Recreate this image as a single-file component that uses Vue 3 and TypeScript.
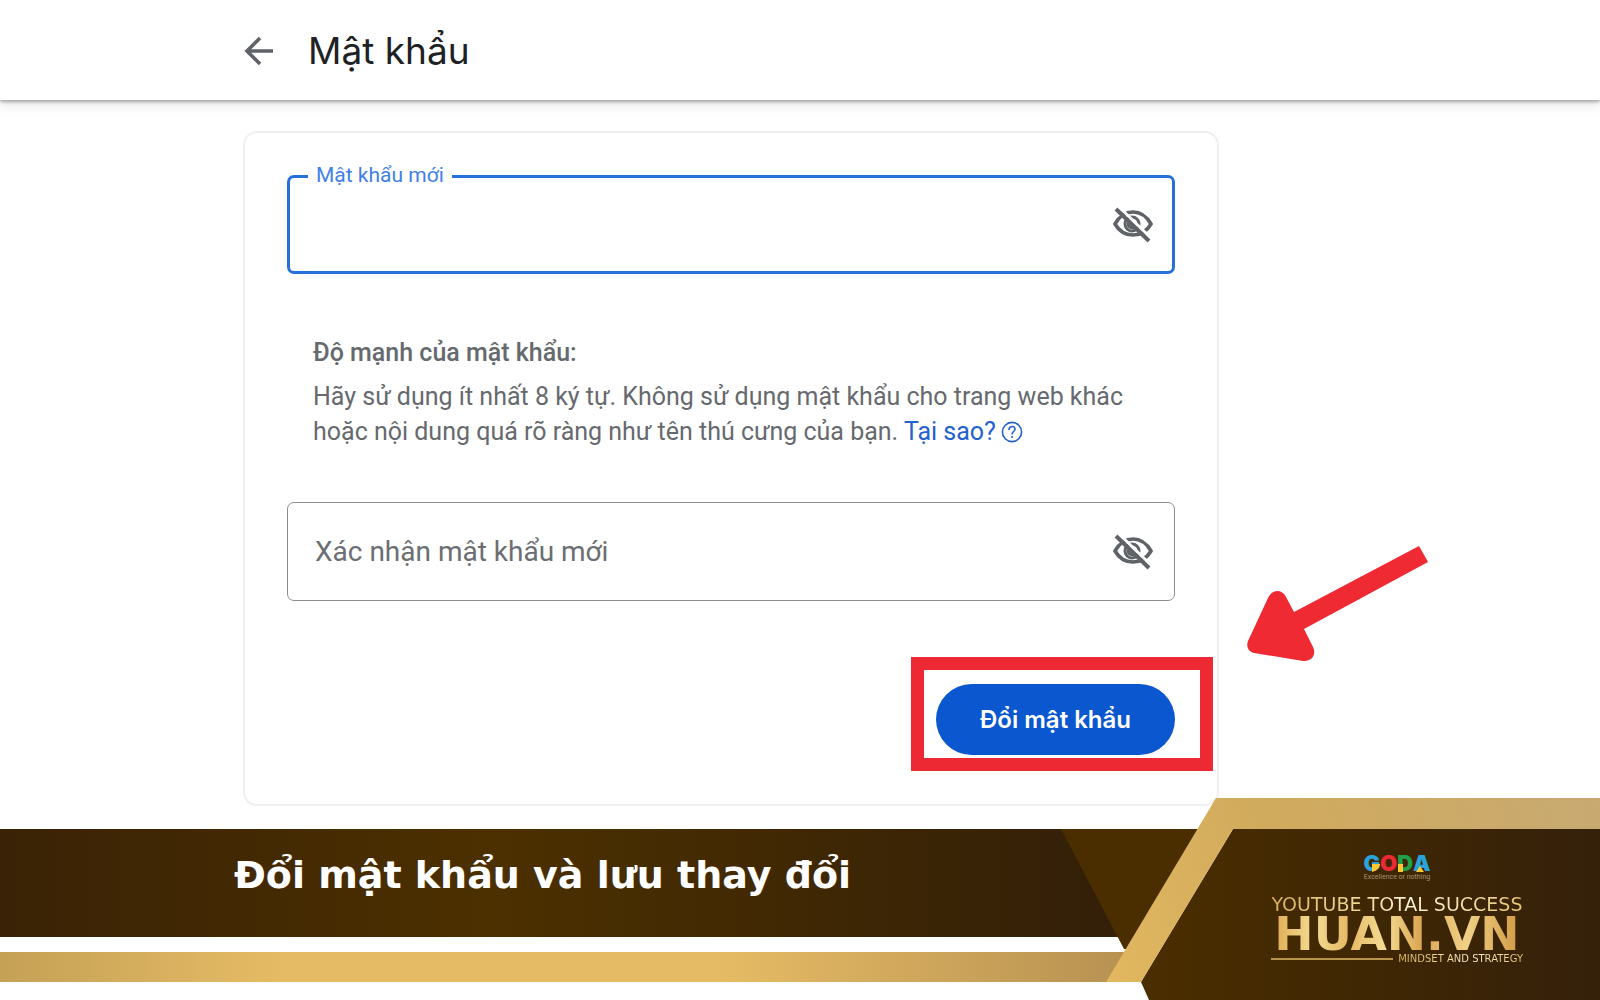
<script setup lang="ts">
import { ref } from 'vue'

const password = ref('')
const confirmation = ref('')
const showPassword = ref(false)
const showConfirmation = ref(false)
</script>

<template>
  <div class="page">
    <header class="topbar">
      <a class="back" href="#" aria-label="Quay lại">
        <svg width="30" height="30" viewBox="0 0 30 30" fill="none" stroke="#5f6368" stroke-width="3.6">
          <path d="M29 15H4M16 2 3 15l13 13" />
        </svg>
      </a>
      <h1>Mật khẩu</h1>
    </header>

    <main class="content">
      <form class="card" @submit.prevent>
        <div class="field focused">
          <label for="new-password">Mật khẩu mới</label>
          <input id="new-password" v-model="password" :type="showPassword ? 'text' : 'password'" />
          <button type="button" class="eye" aria-label="Hiện mật khẩu" @click="showPassword = !showPassword">
            <svg width="42" height="38" viewBox="0 0 42 38" fill="none">
              <path d="M3 18C7 11 13 6 21 6s14 5 18 12c-4 7-10 11-18 11S7 25 3 18Z" stroke="#5f6368" stroke-width="3.6" />
              <circle cx="20" cy="18" r="7" stroke="#5f6368" stroke-width="3" />
              <path d="M16 17c0 4 2 5 6 5" stroke="#5f6368" stroke-width="3" />
              <path d="M7 1l33 32" stroke="#fff" stroke-width="3" />
              <path d="M4 3l33 32" stroke="#5f6368" stroke-width="4" />
            </svg>
          </button>
        </div>

        <section class="hint">
          <h2>Độ mạnh của mật khẩu:</h2>
          <p>
            Hãy sử dụng ít nhất 8 ký tự. Không sử dụng mật khẩu cho trang web khác hoặc nội dung quá rõ ràng như tên thú cưng của bạn.
            <a href="#">Tại sao?<svg class="help" width="22" height="22" viewBox="0 0 22 22" fill="none" stroke="currentColor" stroke-width="1.6"><circle cx="11" cy="11" r="9.6" /><path d="M8 9c0-4.500 6-4.500 6-1 0 2.500-3 2.500-3 5.500M11 15v2" /></svg></a>
          </p>
        </section>

        <div class="field">
          <input
            v-model="confirmation"
            :type="showConfirmation ? 'text' : 'password'"
            placeholder="Xác nhận mật khẩu mới"
            aria-label="Xác nhận mật khẩu mới"
          />
          <button type="button" class="eye" aria-label="Hiện mật khẩu" @click="showConfirmation = !showConfirmation">
            <svg width="42" height="38" viewBox="0 0 42 38" fill="none">
              <path d="M3 18C7 11 13 6 21 6s14 5 18 12c-4 7-10 11-18 11S7 25 3 18Z" stroke="#5f6368" stroke-width="3.6" />
              <circle cx="20" cy="18" r="7" stroke="#5f6368" stroke-width="3" />
              <path d="M16 17c0 4 2 5 6 5" stroke="#5f6368" stroke-width="3" />
              <path d="M7 1l33 32" stroke="#fff" stroke-width="3" />
              <path d="M4 3l33 32" stroke="#5f6368" stroke-width="4" />
            </svg>
          </button>
        </div>

        <div class="actions">
          <div class="callout">
            <button type="submit" class="submit">Đổi mật khẩu</button>
            <span class="frame"></span>
            <svg class="arrow" width="182" height="117" viewBox="0 0 182 117" fill="#ef2a33">
              <path d="M172 1l9 16L57 84l9 18c4 8-2 15-10 14L7 108c-6-1-8-7-6-12l20-43c4-9 14-9 18-1l8 15Z" />
            </svg>
          </div>
        </div>
      </form>
    </main>

    <footer class="banner">
      <svg class="backdrop" viewBox="0 0 1600 202" preserveAspectRatio="none">
        <defs>
          <linearGradient id="dark-band">
            <stop offset="0" stop-color="#3a2206" />
            <stop offset="0.43" stop-color="#4c3000" />
            <stop offset="0.96" stop-color="#342008" />
          </linearGradient>
          <linearGradient id="gold-band">
            <stop offset="0" stop-color="#c5a156" />
            <stop offset="0.25" stop-color="#e6bb65" />
            <stop offset="0.63" stop-color="#e6bb65" />
            <stop offset="1" stop-color="#b69051" />
          </linearGradient>
          <linearGradient id="gold-edge" gradientUnits="userSpaceOnUse" x1="1106" y1="184" x2="1600" y2="0">
            <stop offset="0" stop-color="#e2b75f" />
            <stop offset="0.4" stop-color="#d0aa5d" />
            <stop offset="1" stop-color="#c8aa72" />
          </linearGradient>
          <linearGradient id="panel">
            <stop offset="0" stop-color="#4b2e00" />
            <stop offset="0.5" stop-color="#3f2704" />
            <stop offset="1" stop-color="#35200a" />
          </linearGradient>
        </defs>
        <path d="M0 31h1140v108H0Z" fill="url(#dark-band)" />
        <path d="M1061 31h140l-60 120h-17Z" fill="#4a2e00" />
        <path d="M0 139h1117l7 15H0Z" fill="#fff" />
        <path d="M0 154h1140l-20 30H0Z" fill="url(#gold-band)" />
        <path d="M1233 31h367v171h-451l-8-18Z" fill="url(#panel)" />
        <path d="M1216 0h384v31h-367l-92 153h-35Z" fill="url(#gold-edge)" />
      </svg>
      <p class="caption">Đổi mật khẩu và lưu thay đổi</p>
      <div class="brand">
        <div class="goda">
          <span class="blue">G</span><span class="red">O</span><span class="green">D</span><span class="blue">A</span>
          <svg class="accents" width="66" height="17" viewBox="0 0 66 17" fill="#fdc82f">
            <path d="M9 9h8q0 6-8 8ZM35 9h5v8h-5ZM53 17l4-6 4 6Z" />
          </svg>
        </div>
        <p class="motto">Excellence or nothing</p>
        <p class="series">YOUTUBE TOTAL SUCCESS</p>
        <p class="site">HUAN.VN</p>
        <p class="tagline"><span>MINDSET AND STRATEGY</span></p>
      </div>
    </footer>
  </div>
</template>

<style>
body {
  margin: 0;
}
</style>

<style scoped>
.page {
  min-height: 100vh;
  display: flex;
  flex-direction: column;
  overflow: hidden;
  background: #fff;
  color: #66696e;
  font-family: Roboto, "Noto Sans", sans-serif;
}

h1,
h2,
p {
  margin: 0;
}

.topbar {
  display: flex;
  align-items: center;
  gap: 34px;
  box-sizing: border-box;
  height: 100px;
  padding-top: 2px;
  padding-left: 15.25%;
  box-shadow: 0 2px 3px rgba(60, 64, 67, 0.4), 0 4px 12px rgba(60, 64, 67, 0.15);
}

.back {
  display: flex;
}

h1 {
  color: #202124;
  font: 400 37px/48px Inter, "Noto Sans", sans-serif;
}

.content {
  display: grid;
  grid-template-columns: 243fr 976fr 381fr;
  padding-top: 31px;
}

.card {
  grid-column: 2;
  box-sizing: border-box;
  padding: 42px;
  padding-bottom: 49px;
  border: 2px solid #eff0f1;
  border-radius: 14px;
}

.field {
  position: relative;
  display: flex;
  align-items: center;
  box-sizing: border-box;
  height: 99px;
  padding: 0 20px 0 27px;
  border: 1px solid #8b8d90;
  border-radius: 7px;
}

.field.focused {
  padding: 0 18px 0 25px;
  border: 3px solid #2770dc;
}

.field label {
  position: absolute;
  top: -19px;
  left: 18px;
  padding: 0 8px;
  background: #fff;
  color: #3f7fe6;
  font-size: 21px;
  line-height: 32px;
}

.field input {
  flex: 1;
  min-width: 0;
  padding: 0;
  border: 0;
  outline: 0;
  background: none;
  color: #202124;
  font: 400 28px/36px Roboto, "Noto Sans", sans-serif;
}

.field input::placeholder {
  color: #6b6e73;
  opacity: 1;
}

.eye {
  display: flex;
  padding: 0;
  border: 0;
  background: none;
}

.hint {
  padding: 61px 26px 53px;
}

h2 {
  padding-bottom: 9px;
  font-size: 25px;
  font-weight: 500;
  line-height: 35px;
}

.hint p {
  font-size: 25px;
  line-height: 35px;
}

.hint a {
  color: #2360d0;
  text-decoration: none;
  white-space: nowrap;
}

.help {
  margin-left: 5px;
  vertical-align: -3px;
}

.actions {
  display: flex;
  justify-content: flex-end;
  padding-top: 83px;
}

.callout {
  position: relative;
}

.submit {
  display: block;
  width: 239px;
  height: 71px;
  padding: 0;
  border: 0;
  border-radius: 36px;
  background: #0b57d0;
  color: #fff;
  font: 600 24px/32px Inter, "Noto Sans", sans-serif;
}

.frame {
  position: absolute;
  inset: -27px -38px -16px -25px;
  border: 13px solid #ed2933;
  pointer-events: none;
}

.arrow {
  position: absolute;
  left: 311px;
  bottom: 93px;
  pointer-events: none;
}

.banner {
  position: relative;
  display: grid;
  grid-template-columns: 234fr 1006fr 360px;
  height: 202px;
  margin-top: -8px;
}

.backdrop {
  position: absolute;
  width: 100%;
  height: 100%;
}

.caption {
  position: relative;
  grid-column: 2;
  padding-top: 52px;
  color: #fff;
  font: 700 38px/50px "DejaVu Sans", sans-serif;
}

.brand {
  position: relative;
  grid-column: 3;
  justify-self: start;
  display: flex;
  flex-direction: column;
  align-items: center;
  width: 252px;
  margin-left: 31px;
  padding-top: 55px;
}

.goda {
  position: relative;
  display: flex;
  font: 900 22px/20px Inter, sans-serif;
}

.accents {
  position: absolute;
  left: 0;
  top: 2px;
}

.blue {
  color: #29a3dc;
}

.red {
  color: #ec2a33;
}

.green {
  color: #21a04a;
}

.motto {
  color: #a8906f;
  font-size: 7px;
  line-height: 8px;
}

.series,
.site,
.tagline span {
  background: linear-gradient(90deg, #d9b35f, #f2dfa0 40%, #fbf3d6 55%, #e6c670);
  background-clip: text;
  color: transparent;
  white-space: nowrap;
}

.series {
  padding-top: 13px;
  font: 400 19px/20px "DejaVu Sans", sans-serif;
}

.site {
  background-image: linear-gradient(90deg, #e0ad55, #f3dc92 16%, #e5b964 30%, #f3dc92 45%, #dba652 60%, #f0d085 78%, #d19a45);
  font: 700 47px/39px "DejaVu Sans", sans-serif;
}

.tagline {
  display: flex;
  align-items: center;
  gap: 5px;
  width: 100%;
  font: 400 10px/12px "DejaVu Sans", sans-serif;
}

.tagline::before {
  content: "";
  flex: 1;
  height: 2px;
  background: #b8944f;
}
</style>
